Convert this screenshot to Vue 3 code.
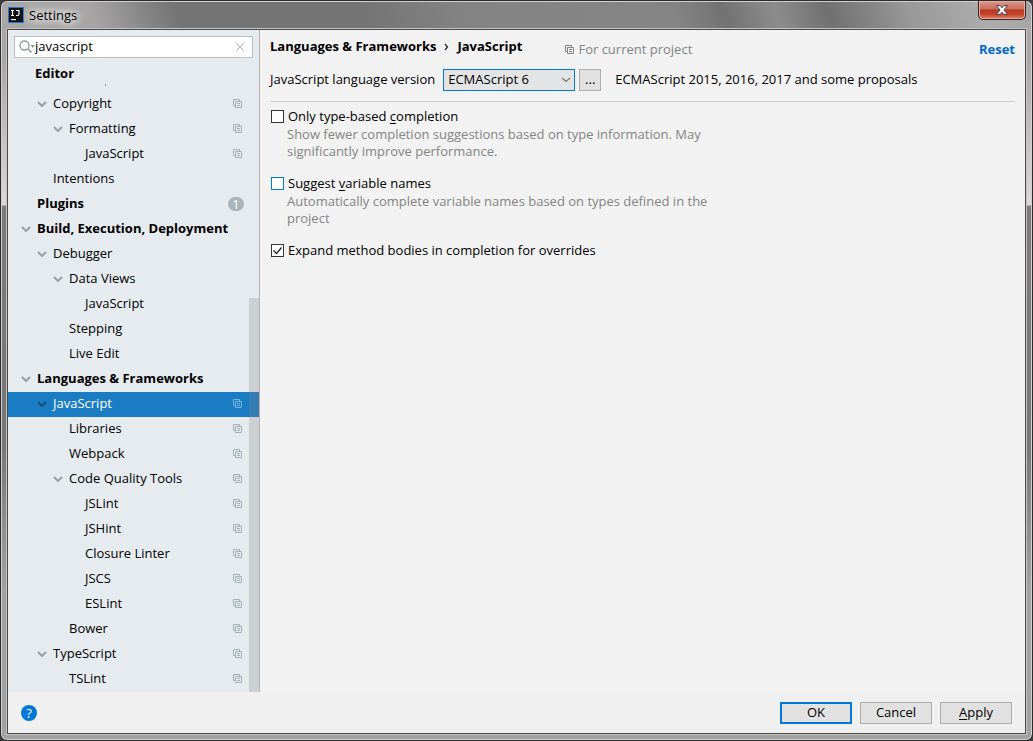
<template>
  <div class="window">
    <header class="titlebar">
      <svg class="logo" viewBox="0 0 16 16" width="16" height="16" aria-hidden="true">
        <rect width="16" height="16" fill="#1f78e0" />
        <rect x="1" y="1" width="14" height="14" fill="#111" />
        <path d="M3 3.5h3M4.500 3.500v5M3 8.500h3M8 3.500h3v3.500q0 1.500-1.500 1.500H8" fill="none" stroke="#fff" stroke-width="1.200" />
        <path d="M3 12h5v1.200H3z" fill="#fff" />
      </svg>
      <h1 class="title">Settings</h1>
      <button class="close" type="button" aria-label="Close">
        <svg viewBox="0 0 14 12" width="14" height="12">
          <path d="M1.500 1.500h3.500l2 2.300 2-2.300h3.500L9 6l3.500 4.500H9L7 8.200 5 10.500H1.500L5 6z" fill="#f4f4f4" stroke="#4b4b55" />
        </svg>
      </button>
    </header>

    <div class="client">
      <div class="columns">
        <aside class="sidebar">
          <div class="search">
            <svg viewBox="0 0 16 14" width="16" height="14" aria-hidden="true">
              <circle cx="5.500" cy="5.500" r="4.500" fill="none" stroke="#8c969d" stroke-width="1.300" />
              <path d="M9 9l3.500 3.500" stroke="#8c969d" stroke-width="1.500" />
              <path d="M11.500 5h4.500l-2.200 3z" fill="#8c969d" />
            </svg>
            <input v-model="query" type="text" aria-label="Search settings" />
            <button type="button" aria-label="Clear search" @click="query = ''">
              <svg viewBox="0 0 10 10" width="10" height="10">
                <path d="M1.500 1.500l7 7M8.500 1.500l-7 7" stroke="#b4b9bd" />
              </svg>
            </button>
          </div>
          <div class="group">Editor</div>
          <ul class="tree">
            <li
              v-for="(item, i) in items"
              :key="i"
              :class="['row', 'level-' + item.level, { selected: selected === i }]"
              @click="selected = i"
            >
              <svg v-if="item.open" class="arrow" viewBox="0 0 10 6" width="10" height="6">
                <path d="M1 1l4 4 4-4" fill="none" stroke="currentColor" stroke-width="2" />
              </svg>
              <span v-else class="arrow"></span>
              <span class="name">{{ item.name }}</span>
              <span v-if="item.badge" class="badge">{{ item.badge }}</span>
              <svg v-if="item.project" class="copy" viewBox="0 0 9 9" width="9" height="9">
                <path d="M2 6.500H.5v-6h6V2M2.500 2.500h6v6h-6zM4 4.500h3M4 6.500h3" fill="none" stroke="currentColor" />
              </svg>
            </li>
          </ul>
          <div class="scrollbar"></div>
        </aside>

        <main class="content">
          <div class="heading">
            <h2 class="crumbs">
              <span>Languages &amp; Frameworks</span>
              <svg viewBox="0 0 5 8" width="5" height="8" aria-hidden="true">
                <path d="M1 1l2.500 3L1 7" fill="none" stroke="#222" stroke-width="1.200" />
              </svg>
              <span>JavaScript</span>
            </h2>
            <span class="scope">
              <svg viewBox="0 0 9 9" width="9" height="9" aria-hidden="true">
                <path d="M2 6.500H.5v-6h6V2M2.500 2.500h6v6h-6zM4 4.500h3M4 6.500h3" fill="none" stroke="currentColor" />
              </svg>
              For current project
            </span>
            <a class="reset" href="#" @click.prevent="reset">Reset</a>
          </div>

          <div class="version">
            <label for="version">JavaScript language version</label>
            <span class="dropdown">
              <select id="version" v-model="version">
                <option>ECMAScript 6</option>
                <option>ECMAScript 5.1</option>
                <option>JSX Harmony</option>
              </select>
              <svg viewBox="0 0 10 6" width="10" height="6" aria-hidden="true">
                <path d="M1 1l4 3.500L9 1" fill="none" stroke="#777" stroke-width="1.200" />
              </svg>
            </span>
            <button class="more" type="button">...</button>
            <span>ECMAScript 2015, 2016, 2017 and some proposals</span>
          </div>

          <div class="options">
            <div class="option">
              <input id="typed" v-model="typeBased" type="checkbox" />
              <label for="typed">Only type-based <u>c</u>ompletion</label>
              <p>Show fewer completion suggestions based on type information. May significantly improve performance.</p>
            </div>
            <div class="option">
              <input id="names" v-model="suggestNames" class="focused" type="checkbox" />
              <label for="names">Suggest <u>v</u>ariable names</label>
              <p>Automatically complete variable names based on types defined in the project</p>
            </div>
            <div class="option">
              <input id="bodies" v-model="expandBodies" type="checkbox" />
              <label for="bodies">Expand method bodies in completion for overrides</label>
            </div>
          </div>
        </main>
      </div>

      <footer class="footer">
        <button class="help" type="button" aria-label="Help">?</button>
        <button class="action primary" type="button">OK</button>
        <button class="action" type="button">Cancel</button>
        <button class="action" type="button"><u>A</u>pply</button>
      </footer>
    </div>
  </div>
</template>

<script setup>
import { ref } from 'vue'

const query = ref('javascript')
const selected = ref(12)
const version = ref('ECMAScript 6')
const typeBased = ref(false)
const suggestNames = ref(false)
const expandBodies = ref(true)

const items = [
  { name: 'Copyright', level: 1, open: true, project: true },
  { name: 'Formatting', level: 2, open: true, project: true },
  { name: 'JavaScript', level: 3, project: true },
  { name: 'Intentions', level: 1 },
  { name: 'Plugins', level: 0, badge: 1 },
  { name: 'Build, Execution, Deployment', level: 0, open: true },
  { name: 'Debugger', level: 1, open: true },
  { name: 'Data Views', level: 2, open: true },
  { name: 'JavaScript', level: 3 },
  { name: 'Stepping', level: 2 },
  { name: 'Live Edit', level: 2 },
  { name: 'Languages & Frameworks', level: 0, open: true },
  { name: 'JavaScript', level: 1, open: true, project: true },
  { name: 'Libraries', level: 2, project: true },
  { name: 'Webpack', level: 2, project: true },
  { name: 'Code Quality Tools', level: 2, open: true, project: true },
  { name: 'JSLint', level: 3, project: true },
  { name: 'JSHint', level: 3, project: true },
  { name: 'Closure Linter', level: 3, project: true },
  { name: 'JSCS', level: 3, project: true },
  { name: 'ESLint', level: 3, project: true },
  { name: 'Bower', level: 2, project: true },
  { name: 'TypeScript', level: 1, open: true, project: true },
  { name: 'TSLint', level: 2, project: true },
]

function reset() {
  version.value = 'ECMAScript 6'
  typeBased.value = false
  suggestNames.value = false
  expandBodies.value = true
}
</script>

<style>
body {
  background: #3c3c3c;
}
</style>

<style scoped>
* {
  box-sizing: border-box;
}

.window {
  display: flex;
  flex-direction: column;
  min-height: 100vh;
  padding: 0 6px 6px;
  border: 1px solid #2b2b2b;
  border-radius: 7px;
  background:
    linear-gradient(70deg, #aaa6a6 0, #a6a4a4 90px, #747474 170px, #747474 35%, #838383 45%, #858585 65%, #727272 70%, #8c8c8c 75%, #707070 80%, #999 88%, #acacac 95%, #a4a4a4 100%) top / 100% 28px no-repeat,
    linear-gradient(#aaa6a6 0, #aaa6a6 60px, #dcd8d8 204px, #7d7a7a 205px, #777 60%, #a2a2a2 80%, #a2a2a2 100%);
  box-shadow: inset 0 0 0 1px #d0d0d0;
  font-family: "Open Sans", "Noto Sans", sans-serif;
  font-size: 13px;
  line-height: 17px;
  color: #000;
}

button,
input,
select {
  margin: 0;
  font: inherit;
  color: inherit;
}

.titlebar {
  display: flex;
  align-items: center;
  gap: 5px;
  height: 28px;
  padding-left: 1px;
}

.title {
  margin: 0;
  font-size: 13px;
  font-weight: 400;
  text-shadow: 0 0 8px #fff, 0 0 8px #fff, 0 0 12px #fff;
}

.close {
  display: flex;
  align-self: flex-start;
  align-items: center;
  justify-content: center;
  width: 48px;
  height: 19px;
  margin-left: auto;
  padding: 0;
  border: 1px solid #40201c;
  border-top: 0;
  border-radius: 0 0 5px 5px;
  background: linear-gradient(#dc9a8e, #c86a5a 45%, #b03a20 50%, #c8452c 75%, #dc8468);
  box-shadow: inset 0 0 0 1px #e0b0a6;
}

.client {
  display: flex;
  flex: 1;
  flex-direction: column;
  border: 1px solid #4a4a4a;
  box-shadow: 0 0 0 1px #c4c4c4;
  background: #f0f0f0;
}

.columns {
  display: flex;
  flex: 1;
}

.sidebar {
  position: relative;
  flex: 0 0 252px;
  border-right: 1px solid #b4b4b4;
  background: #e6ebef;
}

.search {
  display: flex;
  align-items: center;
  height: 22px;
  margin: 6px 6px 3px;
  padding: 0 7px 0 4px;
  border: 1px solid #b9bfc3;
  background: #fff;
}

.search input {
  flex: 1;
  min-width: 0;
  height: 20px;
  padding: 0 0 2px;
  border: 0;
  outline: 0;
  background: none;
}

.search button {
  display: flex;
  padding: 0;
  border: 0;
  background: none;
}

.group {
  position: relative;
  height: 31px;
  padding-left: 27px;
  font-weight: 700;
  line-height: 24px;
}

/* tail of the row scrolled under the group header */
.group::after {
  position: absolute;
  top: 23px;
  left: 97px;
  width: 1px;
  height: 2px;
  background: #8a9095;
  content: "";
}

.tree {
  margin: 0;
  padding: 0;
  list-style: none;
}

.row {
  display: flex;
  align-items: center;
  height: 25px;
  padding: 0 17px 2px 0;
}

.level-0 {
  padding-left: 13px;
  font-weight: 700;
}

.level-1 {
  padding-left: 29px;
}

.level-2 {
  padding-left: 45px;
}

.level-3 {
  padding-left: 61px;
}

.arrow {
  flex: none;
  width: 10px;
  margin-right: 6px;
  color: #97a0a5;
}

.name {
  flex: 1;
}

.copy {
  color: #a3b0b8;
}

.badge {
  width: 16px;
  height: 14px;
  margin-right: -2px;
  border-radius: 7px;
  background: #a9b5bb;
  color: #fff;
  font-weight: 400;
  line-height: 14px;
  text-align: center;
}

.selected {
  background: #1a7dc4;
  color: #fff;
}

.selected .arrow {
  color: #0d4f7d;
}

.selected .copy {
  color: #7fb4dc;
}

.scrollbar {
  position: absolute;
  top: 268px;
  right: 0;
  bottom: 0;
  width: 10px;
  background: rgba(128, 128, 128, 0.25);
}

.content {
  flex: 1;
  padding: 8px 10px 0;
  background: #f2f2f2;
}

.heading {
  display: flex;
  align-items: center;
  height: 22px;
}

.crumbs {
  display: flex;
  align-items: center;
  align-self: flex-start;
  gap: 8px;
  margin: 0;
  font-size: 13px;
}

.scope {
  display: flex;
  align-items: center;
  gap: 4px;
  margin-left: 43px;
  color: #848484;
}

.reset {
  margin-left: auto;
  color: #0068c8;
  font-weight: 700;
  text-decoration: none;
}

.version {
  display: flex;
  align-items: center;
  height: 42px;
  padding-bottom: 2px;
  border-bottom: 1px solid #cfcfcf;
}

.dropdown {
  position: relative;
  margin-left: 8px;
}

.dropdown select {
  display: block;
  width: 132px;
  height: 22px;
  padding: 0 4px;
  border: 1px solid #0078d7;
  border-radius: 0;
  outline: 0;
  background: #e4e4e4;
  appearance: none;
}

.dropdown svg {
  position: absolute;
  top: 8px;
  right: 4px;
  pointer-events: none;
}

.more {
  width: 22px;
  height: 22px;
  margin: 0 14px 0 4px;
  padding: 0;
  border: 1px solid #adadad;
  background: #e1e1e1;
}

.options {
  display: flex;
  flex-direction: column;
  gap: 14px;
  padding-top: 5px;
}

.option {
  display: grid;
  grid-template-columns: 14px 1fr;
  column-gap: 4px;
  align-items: center;
}

.option input {
  width: 13px;
  height: 13px;
  margin-left: 1px;
  border: 1px solid #333;
  background: #fff;
  appearance: none;
}

.option input.focused {
  border-color: #0078d7;
}

.option input:checked {
  background: #fff url("data:image/svg+xml,%3Csvg xmlns='http://www.w3.org/2000/svg' viewBox='0 0 11 11'%3E%3Cpath d='M1.500 5.500l3 3 5-6' fill='none' stroke='%23222' stroke-width='1.200'/%3E%3C/svg%3E");
}

.option label {
  line-height: 19px;
}

.option p {
  grid-column: 1 / -1;
  max-width: 446px;
  margin: 0;
  padding-left: 17px;
  color: #848484;
}

.footer {
  display: flex;
  align-items: center;
  gap: 8px;
  height: 41px;
  padding: 0 13px;
}

.help {
  width: 16px;
  height: 16px;
  margin-right: auto;
  padding: 0;
  border: 0;
  border-radius: 50%;
  background: #0078d7;
  color: #fff;
  line-height: 16px;
}

.action {
  width: 72px;
  height: 22px;
  padding: 0;
  border: 1px solid #adadad;
  background: #e1e1e1;
}

.primary {
  border: 2px solid #0078d7;
}

u {
  text-underline-offset: 2px;
}
</style>
